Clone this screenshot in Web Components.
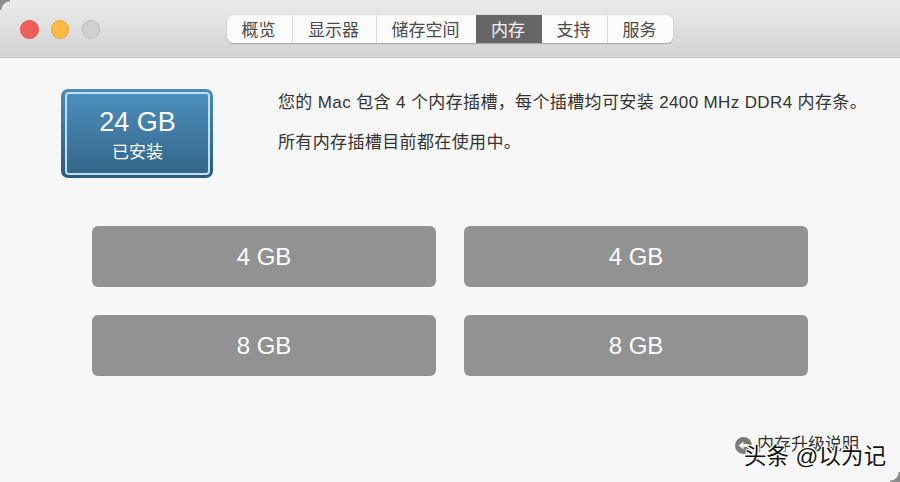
<!DOCTYPE html>
<html lang="zh"><head><meta charset="utf-8">
<style>
html,body{margin:0;padding:0;background:#f6f6f6;}
body{width:900px;height:482px;overflow:hidden;font-family:"Liberation Sans","Noto Sans CJK SC",sans-serif;color:#333;}
</style></head><body>
<about-window>
  <title-bar slot="bar" active="内存" tabs="概览,显示器,储存空间,内存,支持,服务"></title-bar>
  <memory-summary total="24 GB" label="已安装">
    <p>您的 Mac 包含 4 个内存插槽，每个插槽均可安装 2400 MHz DDR4 内存条。</p>
    <p>所有内存插槽目前都在使用中。</p>
  </memory-summary>
  <slot-grid sizes="4 GB,4 GB,8 GB,8 GB"></slot-grid>
  <help-link>内存升级说明</help-link>
  <water-mark>头条 @以为记</water-mark>
</about-window>
<script>
const def=(n,html,init)=>customElements.define(n,class extends HTMLElement{
  constructor(){super();this.attachShadow({mode:'open'}).innerHTML=html;}
  connectedCallback(){init&&init.call(this,this.shadowRoot);}
});
def('about-window',`<style>
:host{display:flex;flex-direction:column;width:900px;height:482px;position:relative;background:#f7f7f7;overflow:hidden}
.c{position:absolute;width:10px;height:10px}
.tl{left:0;top:0;background:radial-gradient(circle at 100% 100%,transparent 8px,#8d8d8d 9px)}
.br{right:0;bottom:0;background:radial-gradient(circle at 0 0,transparent 8px,#8d8d8d 9px)}
</style><slot name="bar"></slot><slot></slot><div class="c tl"></div><div class="c br"></div>`);
def('title-bar',`<style>
:host{display:flex;justify-content:center;box-sizing:border-box;height:58px;padding:15px 0 0 0;position:relative;
background:linear-gradient(#ebebeb,#d3d3d3);border-bottom:1px solid #bfbfbf}
.lights{position:absolute;left:20px;top:20px;display:flex;gap:12.3px}
.lights i{box-sizing:border-box;width:18.5px;height:18.5px;border-radius:50%;border:1px solid}
.r{background:#ee5f57;border-color:#dd5a52!important}.y{background:#fcbb3e;border-color:#e4ab3e!important}.g{background:#d0d0d0;border-color:#bdbdbd!important}
.tabs{display:flex;height:28px;border-radius:6px;background:#fbfbfb;box-shadow:0 1px 1px rgba(0,0,0,.22),0 0 1px rgba(0,0,0,.2);overflow:hidden}
.tabs span{display:flex;align-items:center;justify-content:center;font-size:17px;color:#4b4b4b;border-left:1px solid #dcdcdc;box-sizing:border-box;padding:0 2px 2px 0}
.tabs span:first-child{border-left:0}
.tabs span.on{background:#666;color:#f2f2f2;border-left:0}
.tabs span.on + span{border-left:0}
</style><div class="lights"><i class="r"></i><i class="y"></i><i class="g"></i></div><div class="tabs"></div>`,function(s){
  const w=[65,84,100,66,65,66];const box=s.querySelector('.tabs');const act=this.getAttribute('active');
  this.getAttribute('tabs').split(',').forEach((t,i)=>{const e=document.createElement('span');e.textContent=t;e.style.width=w[i]+'px';if(t===act)e.className='on';box.append(e);});
});
def('memory-summary',`<style>
:host{display:flex;padding:31px 0 0 61px;height:137px;box-sizing:border-box}
.badge{box-sizing:border-box;width:152px;height:89px;border-radius:7px;padding:3px 3px 3px 4px;background:linear-gradient(#4c8bb8,#2c5a7c);flex:none;display:flex}
.in{flex:1;box-sizing:border-box;border:2px solid #bfe0f3;border-radius:4px;background:linear-gradient(#4c8fbd,#336689);color:#fff;display:flex;flex-direction:column;align-items:center}
.t{font-size:27px;line-height:31px;margin-top:13px}
.l{font-size:17px;line-height:24px;margin-top:3px}
.txt{margin-left:65px;padding-top:2px;font-size:17px;color:#333;letter-spacing:.37px;white-space:nowrap}
::slotted(p){margin:0 0 17px;line-height:23px}
</style><div class="badge"><div class="in"><div class="t"></div><div class="l"></div></div></div><div class="txt"><slot></slot></div>`,function(s){
  s.querySelector('.t').textContent=this.getAttribute('total');s.querySelector('.l').textContent=this.getAttribute('label');
});
def('slot-grid',`<style>
:host{display:grid;grid-template-columns:344px 344px;grid-auto-rows:61px;gap:28px;justify-content:center;padding-top:31px}
div{background:#929292;border-radius:6px;color:#fff;font-size:24px;display:flex;align-items:center;justify-content:center}
</style>`,function(s){this.getAttribute('sizes').split(',').forEach(t=>{const d=document.createElement('div');d.textContent=t;s.append(d);});});
def('help-link',`<style>
:host{display:flex;align-items:center;justify-content:flex-end;gap:5px;padding:60px 40px 0 0;margin-right:1px;font-size:17px;color:#333;line-height:18px}
svg{width:17px;height:17px;flex:none}
</style><svg viewBox="0 0 17 17"><circle cx="8.5" cy="8.5" r="8.5" fill="#7a7a7a"/><path d="M3.5 8.5 8.5 4.5V7H13v3H8.5v2.5z" fill="#f4f4f4"/></svg><span><slot></slot></span>`);
def('water-mark',`<style>
:host{position:absolute;left:744px;top:443px;font-size:22.4px;line-height:28px;letter-spacing:.2px;color:#111;white-space:nowrap;
text-shadow:1px 1px 0 #fff,-1px -1px 0 #fff,1px -1px 0 #fff,-1px 1px 0 #fff,2px 2px 1px rgba(255,255,255,.8)}
</style><slot></slot>`);
</script>
</body></html>
